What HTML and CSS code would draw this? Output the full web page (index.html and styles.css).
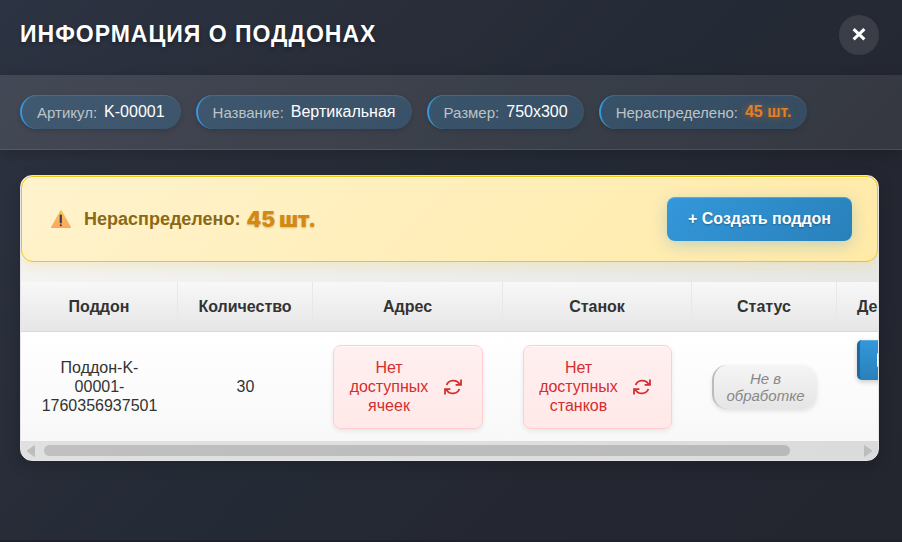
FILE: index.html
```html
<!DOCTYPE html>
<html lang="ru">
<head>
<meta charset="utf-8">
<title>Информация о поддонах</title>
<link rel="stylesheet" href="styles.css">
</head>
<body>
<main class="dialog">
  <header class="dialog-header">
    <h1>ИНФОРМАЦИЯ О ПОДДОНАХ</h1>
    <button class="close" type="button" aria-label="Закрыть">
      <svg width="16" height="16" viewBox="0 0 16 16" aria-hidden="true"><path d="M2.6 2.2 13.4 12.4M13.4 2.2 2.6 12.4"/></svg>
    </button>
  </header>
  <section class="info">
    <div class="chip"><span class="chip-label">Артикул:</span><span class="chip-value">K-00001</span></div>
    <div class="chip"><span class="chip-label">Название:</span><span class="chip-value">Вертикальная</span></div>
    <div class="chip"><span class="chip-label">Размер:</span><span class="chip-value">750x300</span></div>
    <div class="chip"><span class="chip-label">Нераспределено:</span><span class="chip-value chip-warn">45 шт.</span></div>
  </section>
  <section class="content">
    <div class="card">
      <div class="notice">
        <svg class="warn-icon" width="20" height="18" viewBox="0 0 20 18" aria-hidden="true">
          <defs><linearGradient id="warn" x1="0" y1="0" x2="0" y2="1"><stop offset="0" stop-color="#f0c65b"/><stop offset="1" stop-color="#ffa560"/></linearGradient></defs>
          <path d="M9.3.5Q10 0 10.7.5L20 17.2 19.6 18H.4L0 17.2Z" fill="url(#warn)"/>
          <rect x="8.7" y="4.6" width="2.2" height="8.8" rx="1" fill="#433b4c"/>
          <rect x="8.7" y="14.2" width="2.2" height="2" rx="1" fill="#433b4c"/>
        </svg>
        <span class="notice-label">Нераспределено:</span>
        <span class="notice-value">45 шт.</span>
        <button class="create" type="button">+ Создать поддон</button>
      </div>
      <div class="table-wrap">
        <table>
          <colgroup><col class="c-name"><col class="c-qty"><col class="c-place"><col class="c-machine"><col class="c-status"><col class="c-act"></colgroup>
          <thead>
            <tr><th>Поддон</th><th>Количество</th><th>Адрес</th><th>Станок</th><th>Статус</th><th>Действия</th></tr>
          </thead>
          <tbody>
            <tr>
              <td>Поддон-K-00001-1760356937501</td>
              <td>30</td>
              <td><div class="empty"><span>Нет доступных ячеек</span>
                <button class="refresh" type="button" aria-label="Обновить ячейки"><svg width="20" height="18" viewBox="0 0 20 18" aria-hidden="true"><path d="M3.6 7A7 6.5 0 0 1 16.5 6.2M18 1.6V6.8H12.6M16.4 11A7 6.5 0 0 1 3.5 11.8M2 16.4V11.2H7.4"/></svg></button>
              </div></td>
              <td><div class="empty"><span>Нет доступных станков</span>
                <button class="refresh" type="button" aria-label="Обновить станки"><svg width="20" height="18" viewBox="0 0 20 18" aria-hidden="true"><path d="M3.6 7A7 6.5 0 0 1 16.5 6.2M18 1.6V6.8H12.6M16.4 11A7 6.5 0 0 1 3.5 11.8M2 16.4V11.2H7.4"/></svg></button>
              </div></td>
              <td><div class="status">Не в обработке</div></td>
              <td class="actions"><button class="action" type="button" aria-label="Печать"><svg width="16" height="16" viewBox="0 0 16 16" aria-hidden="true"><path d="M0 2.5Q0 1 1.5 1H14V15H1.5Q0 15 0 13.5Z" fill="#fff"/></svg></button></td>
            </tr>
          </tbody>
        </table>
      </div>
      <div class="scrollbar" aria-hidden="true">
        <svg width="10" height="14" viewBox="0 0 10 14"><path d="M8.5 1.5V12.5L1 7Z"/></svg>
        <div class="track"><div class="thumb"></div></div>
        <svg width="10" height="14" viewBox="0 0 10 14"><path d="M1.5 1.5V12.5L9 7Z"/></svg>
      </div>
    </div>
  </section>
</main>
</body>
</html>
```
FILE: styles.css
```css
* { box-sizing: border-box; }
body {
  margin: 0;
  font-family: "Liberation Sans", Arial, sans-serif;
  font-size: 16px;
  background: #1e212c;
}
button { font: inherit; border: 0; padding: 0; cursor: pointer; }
svg { display: block; }
.dialog {
  min-height: calc(100vh - 2px);
  background: linear-gradient(135deg, #2c3342 0%, #292d39 30%, #242b36 50%, #242731 70%, #23262f 100%);
}
.dialog-header {
  display: flex;
  align-items: flex-start;
  justify-content: space-between;
  padding: 15px 23px 20px 20px;
}
h1 {
  margin: 5px 0 0;
  font-size: 23px;
  line-height: 28px;
  letter-spacing: 1px;
  color: #fff;
  text-shadow: 0 2px 4px rgba(0, 0, 0, .3);
}
.close {
  display: grid;
  place-items: center;
  width: 40px;
  height: 40px;
  border-radius: 50%;
  background: rgba(255, 255, 255, .1);
}
.close path { stroke: #fff; stroke-width: 3; fill: none; }
.info {
  display: flex;
  flex-wrap: wrap;
  gap: 15px;
  padding: 20px;
  background: linear-gradient(135deg, rgba(255, 255, 255, .11), rgba(255, 255, 255, .08));
  border-bottom: 1px solid rgba(255, 255, 255, .1);
  box-shadow: 0 4px 15px rgba(0, 0, 0, .2);
}
.chip {
  display: flex;
  align-items: center;
  gap: 7px;
  height: 34px;
  padding: 0 16px 0 15px;
  border-left: 2px solid #3498db;
  border-radius: 17px;
  background: linear-gradient(135deg, rgba(52, 152, 219, .22), rgba(52, 152, 219, .2));
  box-shadow: 0 2px 5px rgba(0, 0, 0, .15), inset 0 1px 0 rgba(255, 255, 255, .1);
  white-space: nowrap;
}
.chip-label { font-size: 15px; color: #bdc3c7; }
.chip-value { color: #fff; }
.chip-warn { font-weight: bold; color: #e67e22; text-shadow: 0 0 8px rgba(230, 126, 34, .5); }
.content { padding: 25px 23px 20px 20px; }
.card {
  overflow: hidden;
  border: 1px solid #e4e4e4;
  border-radius: 12px;
  background: linear-gradient(135deg, #f5f5f5, #e3e5e4);
  box-shadow: 0 4px 15px rgba(0, 0, 0, .2);
}
.notice {
  display: flex;
  align-items: center;
  height: 86px;
  margin-bottom: 20px;
  padding: 0 25px 0 29px;
  border: 1px solid #f1c40f;
  border-radius: 12px;
  background: linear-gradient(135deg, #fff3cd, #ffeaa7);
  box-shadow: 0 4px 15px rgba(241, 196, 15, .2), inset 0 1px 0 rgba(255, 255, 255, .8);
  white-space: nowrap;
}
.notice-label { margin-left: 13px; font-size: 18px; font-weight: bold; color: #8b6914; }
.notice-value {
  margin-left: 6px;
  font-family: Inter, "Liberation Sans", sans-serif;
  font-size: 21px;
  font-weight: 900;
  color: #d68910;
  text-shadow: 0 1px 2px rgba(0, 0, 0, .2);
}
.create {
  height: 44px;
  margin-left: auto;
  padding: 0 21px;
  border-radius: 8px;
  font-weight: bold;
  color: #fff;
  background: linear-gradient(135deg, #3498db, #2980b9);
  box-shadow: 0 4px 15px rgba(52, 152, 219, .3), inset 0 1px 0 rgba(255, 255, 255, .2);
  text-shadow: 0 1px 2px rgba(0, 0, 0, .3);
}
.table-wrap { overflow: hidden; }
table { width: 933px; table-layout: fixed; border-collapse: separate; border-spacing: 0; color: #333; }
.c-name { width: 157px; }
.c-qty { width: 135px; }
.c-place { width: 190px; }
.c-machine { width: 189px; }
.c-status { width: 145px; }
.c-act { width: 117px; }
th {
  height: 50px;
  padding: 0;
  border-right: 1px solid #e8e8e8;
  border-bottom: 1px solid #d8d8d8;
  background: linear-gradient(#f8f8f8, #e6e6e6);
}
td {
  height: 109px;
  padding: 0 20px;
  line-height: 19px;
  text-align: center;
  vertical-align: middle;
}
tbody tr { background: linear-gradient(#fff, #f8f8f8); }
.empty {
  display: flex;
  align-items: center;
  gap: 13px;
  height: 84px;
  padding: 0 19px 0 14px;
  border: 1px solid #ffcdd2;
  border-radius: 8px;
  color: #d32f2f;
  background: linear-gradient(#ffefef, #ffe9e9);
  box-shadow: 0 2px 5px rgba(0, 0, 0, .08), inset 0 1px 0 rgba(255, 255, 255, .6);
}
.refresh { background: none; }
.refresh path { fill: none; stroke: #d32f2f; stroke-width: 1.8; }
.status {
  padding: 5px 12px;
  border-left: 2px solid #bbb;
  border-radius: 15px;
  font-size: 15px;
  line-height: 17px;
  font-style: italic;
  color: #888;
  background: linear-gradient(#f5f5f5, #e5e5e5);
  box-shadow: 0 2px 4px rgba(0, 0, 0, .1);
}
td.actions { padding: 8px 20px; text-align: left; vertical-align: top; }
.action {
  height: 40px;
  padding: 0 17px;
  border-left: 3px solid #2069a0;
  border-radius: 5px;
  background: linear-gradient(#3498db, #2980b9);
  box-shadow: 0 2px 5px rgba(0, 0, 0, .2), inset 0 1px 0 rgba(255, 255, 255, .2);
}
.scrollbar {
  display: flex;
  align-items: center;
  gap: 8px;
  height: 19px;
  padding: 0 5px;
  background: linear-gradient(90deg, #e0e0e0, #dadcdb);
}
.scrollbar path { fill: #bcbebd; stroke: #bcbebd; stroke-width: 1; stroke-linejoin: round; }
.track { flex: 1; }
.thumb { width: 92%; height: 11px; border-radius: 6px; background: linear-gradient(90deg, #c0c0c0, #b8bab9); }
```
